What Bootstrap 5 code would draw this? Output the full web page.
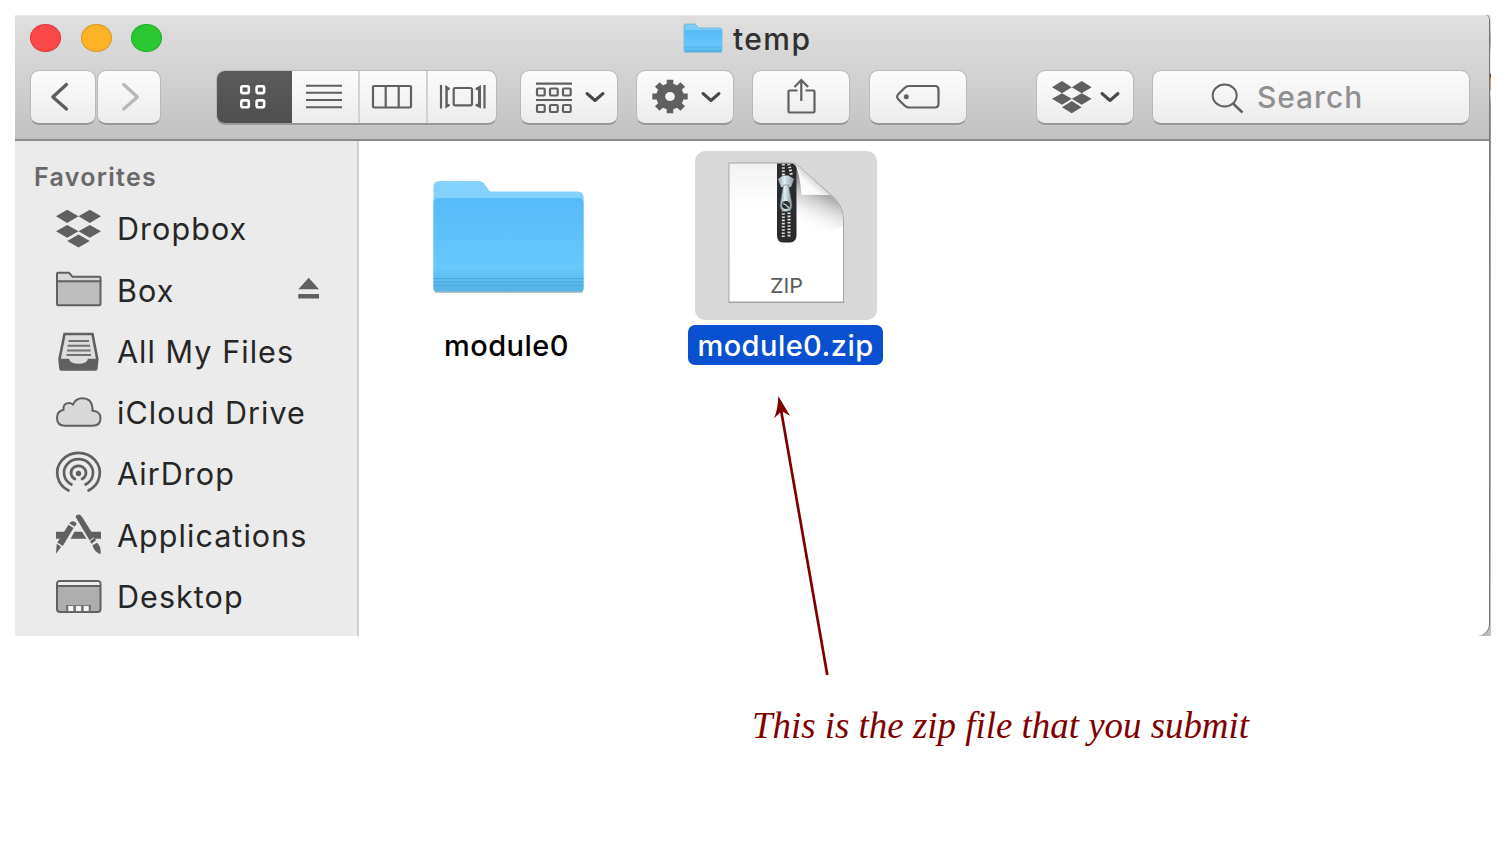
<!DOCTYPE html>
<html lang="en">
<head>
<meta charset="utf-8">
<meta name="viewport" content="width=device-width, initial-scale=1">
<title>temp</title>
<link href="https://cdn.jsdelivr.net/npm/bootstrap@5.3.0/dist/css/bootstrap.min.css" rel="stylesheet">
<style>
body{font-family:Inter,"Liberation Sans",sans-serif;background:#fff;overflow:hidden}
svg{display:block;flex:none}
.finder{width:1476px;height:621px;margin:15px 0 0 15px;background:linear-gradient(#eee 0,#aaa 26px,#eee 40px,#eee 58px,#222 60px,#d58a4a 64px,#d9a070 75px,#eee 77px,#999 88px,#999 126px,#aaa 300px,#aaa 460px,#c4c4c4) right/2px 100% no-repeat,#bcbcbc;padding-right:2px}
.pane{height:100%;border-radius:0 5px 12px 0;overflow:hidden;background:#fff;box-shadow:1px 0 0 #777}
.head{height:126px;background:linear-gradient(#dfdfdf,#c3c3c3);border-bottom:2px solid #8c8c8c;border-top:1px solid #e8e8e8}
.titlebar{height:54px;padding-left:15px}
.light{width:31px;height:28px;border-radius:50%;border:1px solid}
.ttl{font-size:30px;font-weight:500;color:#303030;line-height:1;white-space:nowrap;letter-spacing:1.4px}
.tools{padding-left:15px;height:55px}
.tool{border:1px solid #b9b9b9;border-bottom:2px solid #999;border-radius:9px;background:linear-gradient(#fcfcfc,#ececec);height:55px;padding:0;overflow:hidden;background-clip:padding-box}
.tool svg{margin:-1px}
.seg svg{margin:0}
.seg>div{height:54px}
.seg .picked{background:linear-gradient(#5c5c5c,#4e4e4e);margin:-1px 0 -2px -1px;height:55px}
.seg .cut{border-left:2px solid #d2d2d2}
.find{font-size:30px;color:#909090;line-height:1;font-weight:500;letter-spacing:.9px}
.side{width:344px;background:#ebebeb;border-right:2px solid #cfcfcf}
.favs{font-size:25px;font-weight:600;color:#686868;height:58px;padding:21px 0 0 19px;line-height:30px;letter-spacing:1.3px}
.fav{height:61.25px;padding-left:39px;font-size:30.5px;color:#262626;font-weight:400;white-space:nowrap;letter-spacing:1.05px}
.fav span{margin-left:13px;line-height:1}
.files{padding:10px 0 0 50px;gap:84px}
.file{width:195px}
.thumb{width:182px;height:169px;border-radius:10px}
.picked-thumb{background:#d8d8d8}
.tag-line{height:40px;margin-top:5px;width:195px;border-radius:7px;font-size:29px;font-weight:500;line-height:42px;color:#000;white-space:nowrap;letter-spacing:.45px}
.on{background:#0950d0;color:#fff}
.pointer{left:760px;top:385px}
.note{margin:66px 0 0 752px;font:italic 36.9px/48px "Liberation Serif",serif;color:#800000;white-space:nowrap}
</style>
</head>
<body>
<svg width="0" height="0" class="position-absolute"><defs>
<linearGradient id="blue" x1="0" y1="0" x2="0" y2="1"><stop offset="0" stop-color="#55bbf7"/><stop offset=".75" stop-color="#67c9fc"/><stop offset=".88" stop-color="#5bbcee"/><stop offset="1" stop-color="#54b2e4"/></linearGradient>
<linearGradient id="paper" x1="0" y1="0" x2="0" y2="1"><stop offset="0" stop-color="#f2f2f2"/><stop offset=".3" stop-color="#fff"/></linearGradient>
<linearGradient id="shade" gradientUnits="userSpaceOnUse" x1="828" y1="190" x2="808" y2="234"><stop offset="0" stop-color="#8e8e8e"/><stop offset=".3" stop-color="#cfcfcf"/><stop offset=".9" stop-color="#fff" stop-opacity="0"/></linearGradient>
<linearGradient id="curl" gradientUnits="userSpaceOnUse" x1="803" y1="194" x2="814" y2="181"><stop offset="0" stop-color="#fff"/><stop offset=".6" stop-color="#fafafa"/><stop offset="1" stop-color="#ddd"/></linearGradient>
<linearGradient id="steel" x1="0" y1="0" x2="1" y2="0"><stop offset="0" stop-color="#8fa0a8"/><stop offset=".4" stop-color="#e0edf2"/><stop offset="1" stop-color="#8b9aa1"/></linearGradient>
</defs></svg>

<div class="finder">
<div class="pane d-flex flex-column">
 <header class="head flex-shrink-0">
  <div class="titlebar d-flex align-items-start">
   <div class="d-flex" style="gap:19.5px;margin-top:8px">
    <i class="light" style="background:#fc4848;border-color:#e0383a"></i><i class="light" style="background:#feb226;border-color:#de9523"></i><i class="light" style="background:#29c732;border-color:#1fae28"></i>
   </div>
   <div class="d-flex" style="margin-left:519px">
    <svg width="44" height="40" viewBox="681 16 44 40"><path d="M684 26q0-2 2-2h9l4 4h21q2 0 2 2v20q0 2-2 2h-34q-2 0-2-2z" fill="#7fcdf6" stroke="#5fb2dc" stroke-width=".7"/><path d="M684 30h38v20q0 2-2 2h-34q-2 0-2-2z" fill="url(#blue)"/><path d="M684 47h38M684 51.800h38" stroke="#49a4d6" stroke-width=".6"/></svg>
    <span class="ttl" style="margin:8px 0 0 8px">temp</span>
   </div>
  </div>
  <div class="tools d-flex">
   <div class="tool" style="width:66px"><svg width="66" height="54" viewBox="30 70 66 54"><path d="M66.500 84.500 52.800 97l13.700 12" fill="none" stroke="#5e5e5e" stroke-width="3.300" stroke-linecap="round" stroke-linejoin="round"/></svg></div>
   <div class="tool" style="width:64px;margin-left:1px"><svg width="64" height="54" viewBox="97 70 64 54"><path d="M123.700 84.500 137.400 97l-13.700 12" fill="none" stroke="#b8b8b8" stroke-width="3.300" stroke-linecap="round" stroke-linejoin="round"/></svg></div>
   <div class="tool seg d-flex" style="width:281px;margin-left:55px">
    <div class="picked"><svg width="76" height="54" viewBox="216 70 76 54"><g fill="none" stroke="#fff" stroke-width="2.600"><rect x="241.300" y="86.300" width="7.500" height="6.800" rx="1.500"/><rect x="256.600" y="86.300" width="7.500" height="6.800" rx="1.500"/><rect x="241.300" y="100.400" width="7.500" height="6.800" rx="1.500"/><rect x="256.600" y="100.400" width="7.500" height="6.800" rx="1.500"/></g></svg></div>
    <div><svg width="66" height="54" viewBox="292 71 66 54"><path d="M306 85.700h36M306 92.800h36M306 100h36M306 107.200h36" stroke="#606060" stroke-width="2"/></svg></div>
    <div class="cut"><svg width="66" height="54" viewBox="360 71 66 54"><path d="M374 86h36q1 0 1 1v19.500q0 1-1 1h-36q-1 0-1-1V87q0-1 1-1zM385.700 86v21.500M398.700 86v21.500" fill="none" stroke="#606060" stroke-width="2.200"/></svg></div>
    <div class="cut"><svg width="66" height="54" viewBox="428 71 66 54"><path d="M441 85v23.500M484.500 85v23.500" stroke="#606060" stroke-width="2.200"/><path d="M445.300 85l4.500 3v1.500l-2 1v13l2 1v1.500l-4.500 2.500zM481 85l-5.500 3v1.500l2.500 1v13l-2.500 1v1.500l5.500 2.500z" fill="#606060"/><rect x="453.700" y="88" width="18.300" height="17.300" rx="1.500" fill="none" stroke="#606060" stroke-width="2.200"/></svg></div>
   </div>
   <div class="tool" style="width:98px;margin-left:23px"><svg width="98" height="54" viewBox="520 70 98 54"><g fill="none" stroke="#606060" stroke-width="2.200"><path d="M536 83.700h36M536 100h36"/><rect x="537" y="88.500" width="7.700" height="7" rx="1"/><rect x="550" y="88.500" width="7.700" height="7" rx="1"/><rect x="563" y="88.500" width="7.700" height="7" rx="1"/><rect x="537" y="105" width="7.700" height="7" rx="1"/><rect x="550" y="105" width="7.700" height="7" rx="1"/><rect x="563" y="105" width="7.700" height="7" rx="1"/></g><path d="M587 93.500l8 7 8-7" fill="none" stroke="#484848" stroke-width="3" stroke-linecap="round" stroke-linejoin="round"/></svg></div>
   <div class="tool" style="width:98px;margin-left:18px"><svg width="98" height="54" viewBox="636 70 98 54"><g transform="translate(670 96.500) scale(1.060 1)"><circle r="8.800" fill="none" stroke="#606060" stroke-width="8.400"/><g stroke="#606060" stroke-width="6.200"><path d="M0-10v-6.700M0 10v6.700M-10 0h-6.700M10 0h6.700"/><path d="M-8-8l-4-4M8-8l4-4M-8 8l-4 4M8 8l4 4"/></g></g><path d="M703 93.500l8 7 8-7" fill="none" stroke="#484848" stroke-width="3" stroke-linecap="round" stroke-linejoin="round"/></svg></div>
   <div class="tool" style="width:98px;margin-left:18px"><svg width="98" height="54" viewBox="752 70 98 54"><path d="M797.500 90.500h-8q-1 0-1 1v20q0 1 1 1h24q1 0 1-1v-20q0-1-1-1h-8M801.300 101V80M794.500 87l6.800-7 6.800 7" fill="none" stroke="#606060" stroke-width="2.200"/></svg></div>
   <div class="tool" style="width:98px;margin-left:19px"><svg width="98" height="54" viewBox="869 70 98 54"><path d="M909 86h26q3.500 0 3.500 3.500v14q0 4-3.500 4h-26q-2.500 0-4.500-2l-6-6q-2.800-2.800 0-5.500l6-6q2-2 4.500-2z" fill="none" stroke="#606060" stroke-width="2.200"/><circle cx="906.300" cy="96.700" r="2.500" fill="#606060"/></svg></div>
   <div class="tool" style="width:98px;margin-left:69px"><svg width="98" height="54" viewBox="1036 70 98 54"><path d="M1052 87.300l10-6.300 9.800 6.300-9.800 6zM1071.800 87.300l9.900-6.300 10 6.300-10 6zM1052 98.800l10-5.500 9.800 5.500-9.800 6zM1071.800 98.800l9.900-5.500 10 5.500-10 6zM1062 107.300l9.800-6.300 9.800 6.300-9.800 6z" fill="#606060"/><path d="M1102 93.500l8 7 8-7" fill="none" stroke="#484848" stroke-width="3" stroke-linecap="round" stroke-linejoin="round"/></svg></div>
   <div class="tool d-flex" style="width:318px;margin-left:18px"><svg width="98" height="54" viewBox="1152 70 98 54"><ellipse cx="1224.700" cy="95.500" rx="12" ry="11" fill="none" stroke="#606060" stroke-width="2"/><path d="M1233 103.500l9.500 9" stroke="#606060" stroke-width="2.500"/></svg><span class="find" style="margin:11px 0 0 8px">Search</span></div>
  </div>
 </header>
 <div class="d-flex flex-grow-1">
  <nav class="side">
   <div class="favs">Favorites</div>
   <div class="fav d-flex align-items-center"><svg width="50" height="61" viewBox="54 199 50 61"><path d="M56 216.300l11.200-6.600 11.300 6.600-11.300 6.600zM78.500 216.300l11.300-6.600 11.200 6.600-11.200 6.600zM56 231.300l11.200-6.300 11.300 6.300-11.300 6.400zM78.500 231.300l11.300-6.300 11.200 6.300-11.200 6.400zM67.200 241l11.300-6.600 11.300 6.600-11.300 6.600z" fill="#606060"/></svg><span>Dropbox</span></div>
   <div class="fav d-flex align-items-center"><svg width="50" height="61" viewBox="54 260.200 50 61"><path d="M57 281.500V274q0-1 1-1h11l3.500 4H99.500q1 0 1 1v3.500" fill="#d9d9d9" stroke="#606060" stroke-width="2"/><path d="M57 281.500h43.500v23q0 1-1 1H58q-1 0-1-1z" fill="#bdbdbd" stroke="#606060" stroke-width="2"/></svg><span>Box</span>
    <svg class="ms-auto" style="margin-right:36px" width="24" height="61" viewBox="297 260.200 24 61"><path d="M308.700 278l10.300 11.500h-20.600zM298.300 294.300h20.700v4.500h-20.700z" fill="#606060"/></svg></div>
   <div class="fav d-flex align-items-center"><svg width="50" height="61" viewBox="54 321.500 50 61"><path d="M64.500 333.500h28l4.800 25-1 9.500q0 1-1 1H61.500q-1 0-1-1l-1-9.500z" fill="#ddd" stroke="#606060" stroke-width="2.600"/><path d="M59.500 358.300h9.500q1 5 9.500 5t9.500-5h9.500l-1.200 11H60.800z" fill="#606060"/><path d="M68.500 340.500h20.500M67.500 345.200h22.500M67 350h23.500M66.500 354.500h24.500" stroke="#707070" stroke-width="2"/></svg><span>All My Files</span></div>
   <div class="fav d-flex align-items-center"><svg width="50" height="61" viewBox="54 382.800 50 61"><path d="M65 425.500q-8 0-8-8 0-6.500 6.500-8-.5-6.500 5-6.800 2.500-.2 4.500 1.600 2.500-6.300 9.500-6.300 9 0 10 9.500v3q8 .5 8 7.500 0 7.500-8 7.500z" fill="#d9d9d9" stroke="#606060" stroke-width="2"/></svg><span>iCloud Drive</span></div>
   <div class="fav d-flex align-items-center"><svg width="50" height="61" viewBox="54 444 50 61"><g fill="none" stroke="#606060" stroke-width="2.700" stroke-linecap="round"><path d="M68.500 490.500a21.300 20 0 1 1 20 0M71.500 484.500a14.500 13.500 0 1 1 14 0M75 479a7.500 7 0 1 1 7 0"/></g><circle cx="78.500" cy="473.500" r="2.700" fill="#606060"/></svg><span>AirDrop</span></div>
   <div class="fav d-flex align-items-center"><svg width="50" height="61" viewBox="54 505.200 50 61"><path d="M56 532h9.500l-3.500 7h-6zM74.500 532h7.500l4.500 7h-16zM90.500 532H101v7h-6.500z" fill="#606060"/><g fill="#606060"><path d="M75.500 517q1.500-3 4.500-2l2 2 12.500 20-5 3.500zM90 541.500l4.500-3.500 1.500 2.500-4.500 3.500zM92.500 545.500l4.500-2.500q4.500 4 3.500 11.500-7-3-8-9zM70.500 522.500q2-2 5 0l1.200 1.500-2 3-5.500-3.500zM68.500 525l5 3.300-10.700 18-5.500-3.500zM56.700 544l4.500 3-5.200 7z"/></g></svg><span>Applications</span></div>
   <div class="fav d-flex align-items-center"><svg width="50" height="61" viewBox="54 566.500 50 61"><rect x="57" y="580.500" width="43.500" height="31" rx="3" fill="#aeaeae" stroke="#606060" stroke-width="2"/><path d="M58 585v-2q0-1.500 1.500-1.500H98q1.500 0 1.500 1.500v2z" fill="#eee"/><path d="M57 585.500h43.500" stroke="#606060" stroke-width="2"/><path d="M66 611v-6.500h25v6.500" fill="#777"/><path d="M68.300 605.500h5v5h-5zM76 605.500h5v5h-5zM83.700 605.500h5v5h-5z" fill="#f4f4f4"/></svg><span>Desktop</span></div>
  </nav>
  <main class="files d-flex align-items-start">
   <div class="file d-flex flex-column align-items-center">
    <div class="thumb"><svg width="182" height="169" viewBox="416 151 182 169"><path d="M434 196h149.200v95q0 2-2 2H436q-2 0-2-2z" fill="#999" opacity=".6"/><path d="M433.500 187q0-6 6-6H479q3 0 5 2.500l4 5.500q1.500 2.500 4 2.500h85.500q6 0 6 6v91q0 3-3 3H436.500q-3 0-3-3z" fill="#82d2fd"/><path d="M433.500 203q0-5 5-5h140q5 0 5 5v85.500q0 3-3 3H436.500q-3 0-3-3z" fill="url(#blue)"/><path d="M433.500 278.500h150M433.500 282h150M433.500 285.500h150" stroke="#4ba7db" stroke-width="1"/></svg></div>
    <div class="tag-line text-center">module0</div>
   </div>
   <div class="file d-flex flex-column align-items-center">
    <div class="thumb picked-thumb"><svg width="182" height="169" viewBox="695 151 182 169">
     <path d="M728.500 162.500H791q4 0 8 3.500L830.500 194q13.500 11 13.500 27V303H728.500z" fill="#a6a6a6"/>
     <path d="M729.500 163.500H791q4 0 8 3.500L830 195q13 11 13 26V301.500H729.500z" fill="url(#paper)"/>
     <path d="M796 166q4 10 5.500 29 18-.5 28.500 0 13 11 13 26v5q-14 8-46 8z" fill="url(#shade)"/>
     <path d="M796 164.500q8 12 6.500 30 12-2 28 1L799 167z" fill="url(#curl)"/>
     <path d="M777 163.500h13q6 0 6.500 5V235q0 7-6 7.500h-7.500q-6 0-6-7.500z" fill="#2b2b2d"/>
     <path d="M783.300 164v12M783.300 210v27M789 206v31" stroke="#ddd" stroke-width="3" stroke-dasharray="1.600 1.600"/><path d="M788.500 164q2 5 3 12" stroke="#ddd" stroke-width="3" fill="none" stroke-dasharray="1.600 1.600"/>
     <path d="M778 179l5-3.500h5.500l5.500 3.500-3 8h-10z" fill="url(#steel)"/>
     <path d="M783.500 185h5l3 17q2 9-5.500 9.500-7.500-.5-5.500-9.500z" fill="url(#steel)" stroke="#65747b" stroke-width=".6"/>
     <circle cx="786" cy="205" r="4" fill="#2c2c2e"/><path d="M783 203.500l3 1.500 3 3" stroke="#cdd6da" stroke-width="1.200"/>
     <text x="770" y="293" font-family="Inter,sans-serif" font-size="20.500" fill="#5b5b5b" textLength="33" lengthAdjust="spacingAndGlyphs">ZIP</text></svg></div>
    <div class="tag-line on text-center">module0.zip</div>
   </div>
  </main>
 </div>
</div>
</div>
<svg class="pointer position-absolute" width="90" height="300" viewBox="760 385 90 300"><path d="M780.500 407L827.300 675" stroke="#800000" stroke-width="2.700"/><path d="M778.300 396l11.700 19.800-8.300-4.500-7.700 7q4-9 4.300-22.300z" fill="#800000"/></svg>
<p class="note">This is the zip file that you submit</p>
<script src="https://cdn.jsdelivr.net/npm/bootstrap@5.3.0/dist/js/bootstrap.bundle.min.js"></script>
</body>
</html>
